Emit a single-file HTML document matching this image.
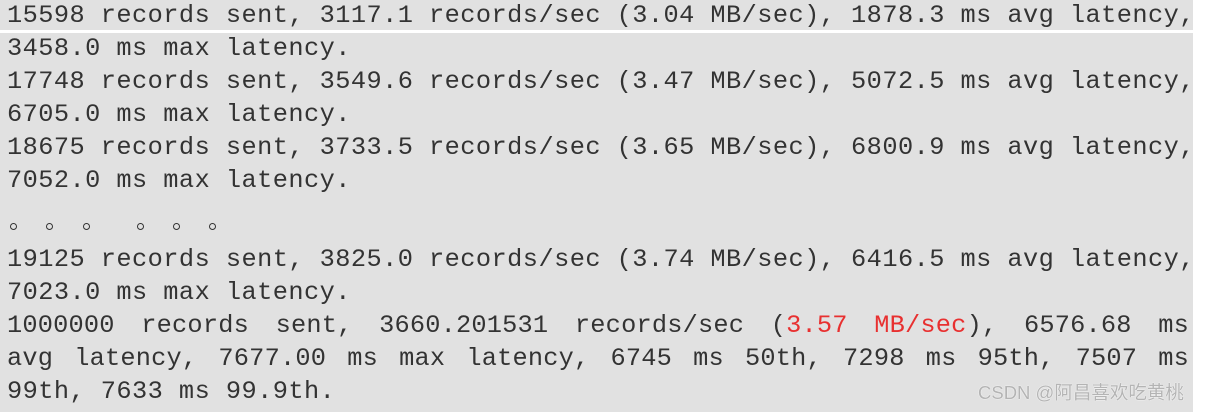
<!DOCTYPE html>
<html><head><meta charset="utf-8"><style>
html,body{margin:0;padding:0;background:#fff;width:1205px;height:412px;overflow:hidden;}
.bg{position:absolute;left:0;width:1193px;background:#e1e1e1;}
.l{position:absolute;left:7px;width:1182px;height:33px;line-height:33px;font-family:"Liberation Mono",monospace;font-size:25.3px;letter-spacing:0.45px;color:#333;white-space:pre;}
.j{white-space:normal;text-align:justify;text-align-last:justify;letter-spacing:0.2px;}
.r{color:#e83030;}
.d{position:absolute;top:223px;width:5px;height:5px;border:1.6px solid #333;border-radius:50%;}
.wm{position:absolute;left:978px;top:379px;font-family:"Liberation Sans","Noto Sans CJK SC",sans-serif;font-size:18.5px;color:#b4b4b4;text-shadow:0 0 1px #fff,0 0 1px #fff;}
</style></head><body>
<div class="bg" style="top:0;height:30px"></div>
<div class="bg" style="top:33px;height:379px"></div>
<div class="l" style="top:-1px">15598 records sent, 3117.1 records/sec (3.04 MB/sec), 1878.3 ms avg latency,</div>
<div class="l" style="top:32px">3458.0 ms max latency.</div>
<div class="l" style="top:65px">17748 records sent, 3549.6 records/sec (3.47 MB/sec), 5072.5 ms avg latency,</div>
<div class="l" style="top:98px">6705.0 ms max latency.</div>
<div class="l" style="top:131px">18675 records sent, 3733.5 records/sec (3.65 MB/sec), 6800.9 ms avg latency,</div>
<div class="l" style="top:164px">7052.0 ms max latency.</div>
<div class="d" style="left:10px"></div><div class="d" style="left:46px"></div><div class="d" style="left:83px"></div>
<div class="d" style="left:137px"></div><div class="d" style="left:173px"></div><div class="d" style="left:209px"></div>
<div class="l" style="top:243px">19125 records sent, 3825.0 records/sec (3.74 MB/sec), 6416.5 ms avg latency,</div>
<div class="l" style="top:276px">7023.0 ms max latency.</div>
<div class="l j" style="top:309px">1000000 records sent, 3660.201531 records/sec (<span class="r">3.57 MB/sec</span>), 6576.68 ms</div>
<div class="l j" style="top:342px">avg latency, 7677.00 ms max latency, 6745 ms 50th, 7298 ms 95th, 7507 ms</div>
<div class="l" style="top:375px">99th, 7633 ms 99.9th.</div>
<div class="wm">CSDN @阿昌喜欢吃黄桃</div>
</body></html>
